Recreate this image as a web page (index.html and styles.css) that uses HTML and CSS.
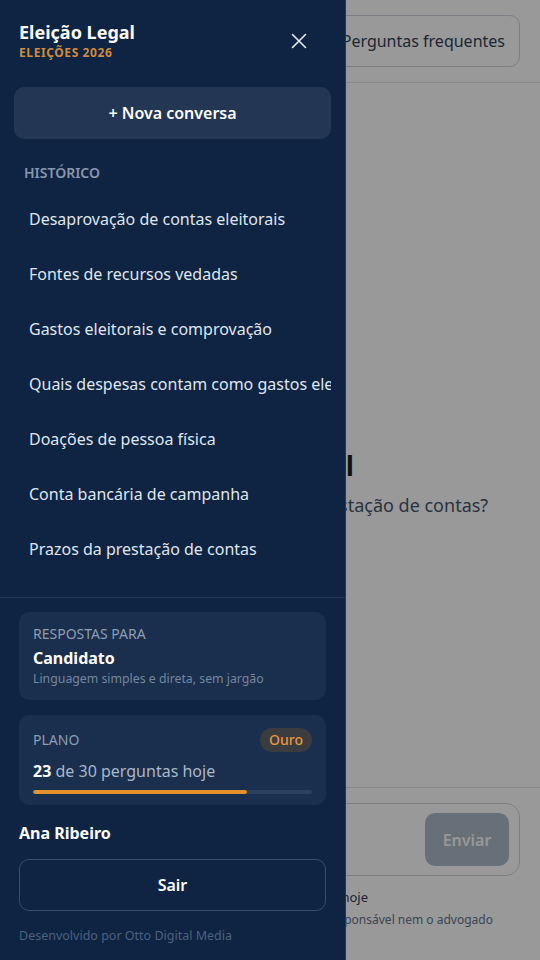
FILE: index.html
```html
<!DOCTYPE html>
<html lang="pt-BR">
<head>
<meta charset="utf-8">
<title>Eleição Legal</title>
<link rel="stylesheet" href="styles.css">
</head>
<body>
<div class="app">
  <header class="topbar">
    <button class="faq-btn">Perguntas frequentes</button>
  </header>
  <main class="welcome">
    <h1 class="welcome-title">Eleição Legal</h1>
    <p class="welcome-sub">Como posso ajudar com a sua prestação de contas?</p>
  </main>
  <footer class="composer">
    <div class="input-box">
      <span class="input-placeholder">Digite sua pergunta...</span>
      <button class="send-btn">Enviar</button>
    </div>
    <p class="quota">Usadas 23 de 30 perguntas hoje</p>
    <p class="disclaimer">Respostas informativas. Não substitui o contador responsável nem o advogado</p>
  </footer>
</div>

<div class="backdrop"></div>

<aside class="drawer">
  <div class="drawer-head">
    <div class="brand">
      <div class="brand-name">Eleição Legal</div>
      <div class="brand-tag">ELEIÇÕES 2026</div>
    </div>
    <button class="close-btn" aria-label="Fechar">
      <svg width="16" height="16" viewBox="0 0 16 16" fill="none" stroke="#e6ecf4" stroke-width="1.6" stroke-linecap="round"><path d="M1.5 1.5l13 13M14.5 1.5l-13 13"/></svg>
    </button>
  </div>

  <button class="new-chat">+ Nova conversa</button>

  <nav class="history">
    <div class="history-label">HISTÓRICO</div>
    <ul class="history-list">
      <li class="history-item">Desaprovação de contas eleitorais</li>
      <li class="history-item">Fontes de recursos vedadas</li>
      <li class="history-item">Gastos eleitorais e comprovação</li>
      <li class="history-item">Quais despesas contam como gastos eleitorais?</li>
      <li class="history-item">Doações de pessoa física</li>
      <li class="history-item">Conta bancária de campanha</li>
      <li class="history-item">Prazos da prestação de contas</li>
    </ul>
  </nav>

  <div class="drawer-foot">
    <div class="card">
      <div class="card-label">RESPOSTAS PARA</div>
      <div class="card-title">Candidato</div>
      <div class="card-desc">Linguagem simples e direta, sem jargão</div>
    </div>
    <div class="card plan">
      <div class="plan-row">
        <span class="card-label">PLANO</span>
        <span class="pill">Ouro</span>
      </div>
      <div class="plan-usage"><strong>23</strong> de 30 perguntas hoje</div>
      <div class="bar"><div class="bar-fill" style="width: 76.7%"></div></div>
    </div>
    <div class="user-name">Ana Ribeiro</div>
    <button class="logout">Sair</button>
    <div class="credit">Desenvolvido por Otto Digital Media</div>
  </div>
</aside>
</body>
</html>
```

FILE: styles.css
```css
* { box-sizing: border-box; }

html, body {
  margin: 0;
  height: 100%;
}

body {
  font-family: "Noto Sans", "Open Sans", sans-serif;
  background: #ffffff;
  color: #1f2937;
  overflow: hidden;
}

button {
  font-family: inherit;
  cursor: pointer;
}

/* ---- main chat page ---- */
.app {
  height: 100vh;
  display: flex;
  flex-direction: column;
}

.topbar {
  height: 83px;
  flex: none;
  display: flex;
  justify-content: flex-end;
  align-items: flex-start;
  padding: 15px 20px 0;
  border-bottom: 1px solid #e2e5ea;
}

.faq-btn {
  height: 52px;
  padding: 0 14px;
  background: #fff;
  border: 1px solid #cdd3da;
  border-radius: 10px;
  font-size: 16px;
  color: #334155;
}

.welcome {
  flex: 1;
  display: flex;
  flex-direction: column;
  align-items: center;
  justify-content: flex-end;
  padding-bottom: 269px;
  text-align: center;
}

.welcome-title {
  margin: 0;
  font-size: 26px;
  font-weight: 700;
  color: #0f1b2d;
  line-height: 36px;
  white-space: nowrap;
}

.welcome-sub {
  margin: 8px 0 0;
  font-size: 18px;
  color: #475569;
  line-height: 26px;
  white-space: nowrap;
}

.composer {
  flex: none;
  border-top: 1px solid #e2e5ea;
  padding: 15px 20px 0;
  height: 173px;
  text-align: center;
}

.input-box {
  height: 73px;
  border: 1px solid #cdd3da;
  border-radius: 14px;
  display: flex;
  align-items: center;
  justify-content: space-between;
  padding: 0 10px 0 16px;
}

.input-placeholder {
  font-size: 16px;
  color: #94a3b8;
}

.send-btn {
  width: 84px;
  height: 53px;
  border: none;
  border-radius: 10px;
  background: #acb9ca;
  color: #fbfcfd;
  font-size: 16px;
  font-weight: 600;
}

.quota {
  margin: 12px 0 0;
  font-size: 13px;
  color: #334155;
  line-height: 18px;
  white-space: nowrap;
}

.disclaimer {
  margin: 5px -20px 0;
  font-size: 12px;
  color: #64748b;
  line-height: 18px;
  white-space: nowrap;
}

/* ---- backdrop behind the drawer ---- */
.backdrop {
  position: fixed;
  inset: 0;
  background: rgba(0, 0, 0, 0.4);
}

/* ---- side drawer ---- */
.drawer {
  position: fixed;
  top: 0;
  left: 0;
  bottom: 0;
  width: 346px;
  background: #0f2342;
  border-right: 1px solid #24385a;
  display: flex;
  flex-direction: column;
  color: #e6ecf4;
}

.drawer-head {
  display: flex;
  justify-content: space-between;
  align-items: center;
  padding: 20px 30px 0 19px;
}

.brand-name {
  font-size: 18px;
  font-weight: 700;
  line-height: 24px;
  color: #ffffff;
}

.brand-tag {
  font-size: 12px;
  font-weight: 700;
  line-height: 17px;
  letter-spacing: 0.6px;
  color: #cf8c3c;
}

.close-btn {
  width: 32px;
  height: 32px;
  padding: 0;
  border: none;
  background: transparent;
  display: flex;
  align-items: center;
  justify-content: center;
}

.new-chat {
  margin: 26px 14px 0;
  height: 52px;
  border: none;
  border-radius: 10px;
  background: #233653;
  color: #ffffff;
  font-size: 16px;
  font-weight: 600;
}

.history {
  flex: 1;
  min-height: 0;
  padding: 24px 14px 0;
  overflow: hidden;
}

.history-label {
  padding: 0 10px;
  font-size: 14px;
  font-weight: 600;
  line-height: 20px;
  color: #8797ad;
}

.history-list {
  list-style: none;
  margin: 8px 0 0;
  padding: 0;
}

.history-item {
  height: 55px;
  display: flex;
  align-items: center;
  padding: 0 0 0 15px;
  font-size: 16px;
  color: #dfe6ef;
  white-space: nowrap;
  overflow: hidden;
}

.drawer-foot {
  flex: none;
  border-top: 1px solid #22365a;
  padding: 14px 19px 16px;
  display: flex;
  flex-direction: column;
}

.card {
  background: #1a2e4d;
  border-radius: 10px;
  padding: 13px 14px;
}

.card-label {
  font-size: 14px;
  line-height: 18px;
  color: #8d9db3;
}

.card-title {
  margin-top: 4px;
  font-size: 16px;
  font-weight: 700;
  line-height: 22px;
  color: #ffffff;
}

.card-desc {
  margin-top: 2px;
  font-size: 12.3px;
  line-height: 16px;
  color: #7587a0;
}

.plan {
  margin-top: 15px;
  padding-bottom: 11px;
}

.plan-row {
  display: flex;
  justify-content: space-between;
  align-items: center;
  height: 24px;
}

.pill {
  height: 24px;
  padding: 0 9px;
  border-radius: 12px;
  background: #3a3c40;
  color: #e8953a;
  font-size: 14px;
  font-weight: 500;
  line-height: 24px;
}

.plan-usage {
  margin-top: 8px;
  font-size: 16px;
  line-height: 22px;
  color: #a9b7c9;
}

.plan-usage strong {
  color: #ffffff;
  font-weight: 700;
}

.bar {
  margin-top: 8px;
  height: 4px;
  border-radius: 2px;
  background: #2b3f5e;
  overflow: hidden;
}

.bar-fill {
  height: 100%;
  border-radius: 2px;
  background: #e3902d;
}

.user-name {
  margin-top: 17px;
  font-size: 16px;
  font-weight: 700;
  line-height: 22px;
  color: #ffffff;
}

.logout {
  margin-top: 15px;
  height: 52px;
  border: 1px solid #3a4d6b;
  border-radius: 10px;
  background: transparent;
  color: #ffffff;
  font-size: 16px;
  font-weight: 600;
}

.credit {
  margin-top: 17px;
  font-size: 12.5px;
  line-height: 16px;
  color: #4d6180;
}
```
